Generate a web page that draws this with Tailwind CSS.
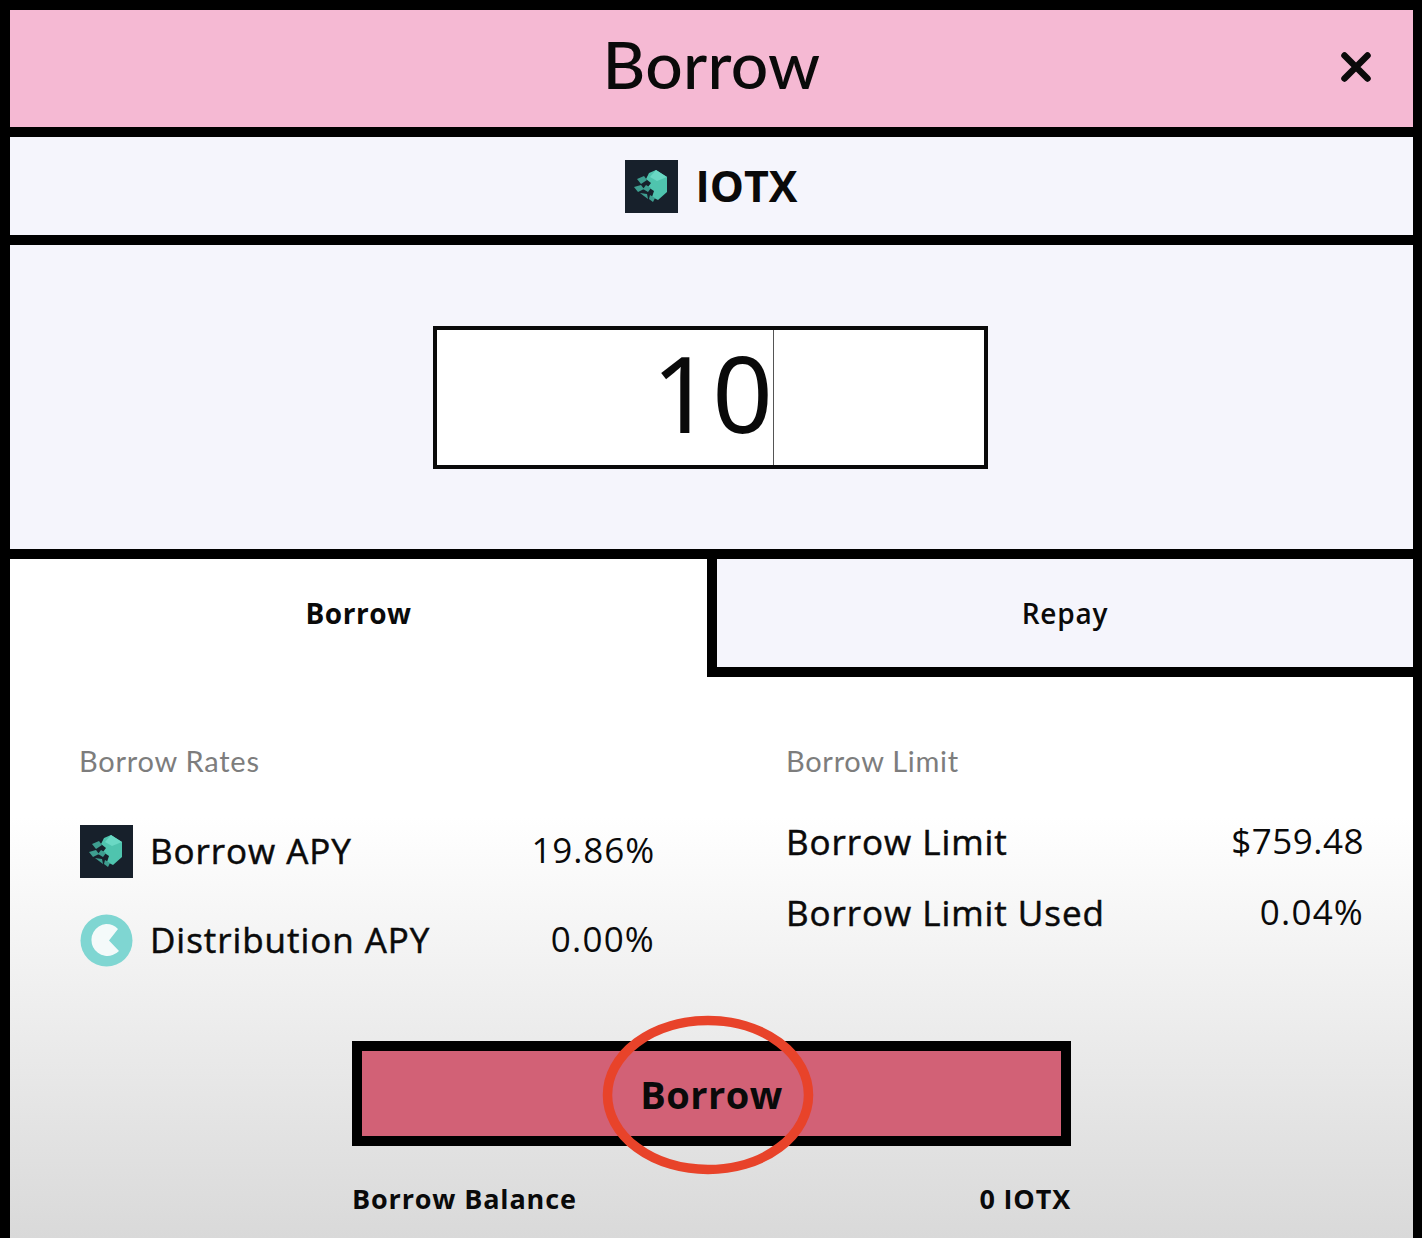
<!DOCTYPE html>
<html lang="en">
<head>
  <meta charset="UTF-8">
  <title>Borrow</title>
  <script src="https://cdn.jsdelivr.net/npm/@tailwindcss/browser@4"></script>
</head>
<body class="bg-black font-['Open_Sans',sans-serif] text-[#0a0a0a]">
  <div class="h-[1238px] w-[1422px] overflow-hidden bg-black pl-[10px] pr-[9px] pt-[10px]">
    <!-- title -->
    <header class="relative flex h-[117px] items-center justify-center bg-[#f5b9d3] pb-[9px]">
      <h1 class="font-['Lato',sans-serif] text-[66px] font-medium leading-none tracking-[0.3px]">Borrow</h1>
      <svg class="absolute left-[1330px] top-[41px]" width="32" height="32" viewBox="0 0 32 32" fill="none" stroke="#0a0a0a" stroke-width="6.5" stroke-linecap="round">
        <path d="M4.5 4.5l23 23M27.5 4.5l-23 23"/>
      </svg>
    </header>

    <!-- asset -->
    <div class="mt-[10px] flex h-[98px] items-center justify-center gap-[17px] bg-[#f5f5fc]">
      <svg width="53" height="53" viewBox="0 0 53 53">
        <rect width="53" height="53" fill="#17202b"/>
        <path d="M24 13l7-3 11 7v15l-9 8-6-3 2-6-6-4 3-4-5-4z" fill="#4fc4ae"/>
        <path d="M31 10l11 7-10 4-7-4z" fill="#6ad8c4"/>
        <path d="M12 19l7-3 3 4-6 4zM9 27l7-2 3 4-6 3zM21 25l5 3-3 4-5-3zM15 33l7 1 1 5zM25 35l5 3-2 4-4-3z" fill="#3e9e90"/>
      </svg>
      <span class="pb-[2px] text-[43px] font-bold leading-none">IOTX</span>
    </div>

    <!-- amount -->
    <div class="mt-[10px] flex h-[304px] items-center justify-center bg-[#f5f5fc]">
      <div class="mr-[2px] flex h-[143px] w-[555px] items-center justify-end border-[4px] border-[#0a0a0a] bg-white">
        <div class="flex h-full w-[337px] items-center justify-end border-r border-[#555]">
          <span class="pb-[11px] font-['Noto_Sans',sans-serif] text-[106px] leading-none">10</span>
        </div>
        <div class="w-[210px]"></div>
      </div>
    </div>

    <!-- tabs and details -->
    <section class="mt-[10px] h-[679px] bg-[linear-gradient(to_bottom,#ffffff_0%,#ffffff_38%,#d9d9d9_100%)]">
      <div class="flex h-[118px]">
        <div class="flex w-[697px] items-center justify-center pb-[10px] text-[28px] font-bold tracking-[0.5px]">Borrow</div>
        <div class="flex flex-1 items-center justify-center border-b-[10px] border-l-[10px] border-black bg-[#f5f5fc] text-[28px] font-semibold tracking-[0.8px]">Repay</div>
      </div>

      <div class="grid grid-cols-[707px_1fr] pt-[65px]">
        <div class="pl-[70px] pr-[62px]">
          <p class="ml-[-1px] font-['Lato',sans-serif] text-[29px] leading-[38px] tracking-[0.75px] text-[#7d7d7d]">Borrow Rates</p>
          <div class="mt-[44px] flex h-[53px] items-center justify-between">
            <div class="flex items-center gap-[17px]">
              <svg class="translate-y-px" width="53" height="53" viewBox="0 0 53 53">
                <rect width="53" height="53" fill="#17202b"/>
                <path d="M24 13l7-3 11 7v15l-9 8-6-3 2-6-6-4 3-4-5-4z" fill="#4fc4ae"/>
                <path d="M31 10l11 7-10 4-7-4z" fill="#6ad8c4"/>
                <path d="M12 19l7-3 3 4-6 4zM9 27l7-2 3 4-6 3zM21 25l5 3-3 4-5-3zM15 33l7 1 1 5zM25 35l5 3-2 4-4-3z" fill="#3e9e90"/>
              </svg>
              <span class="text-[35px] leading-none tracking-[0.95px] [-webkit-text-stroke:0.5px_#0a0a0a]">Borrow APY</span>
            </div>
            <span class="pb-[2px] text-[35px] leading-none tracking-[0.9px]">19.86%</span>
          </div>
          <div class="mt-[36px] flex h-[53px] items-center justify-between">
            <div class="flex items-center gap-[17px]">
              <svg class="translate-y-px" width="53" height="53" viewBox="0 0 53 53">
                <circle cx="26.5" cy="26.5" r="26" fill="#7fd6d2"/>
                <path d="M26 10A16 16 0 1 0 39 37L29 26.5 38 15A16 16 0 0 0 26 10z" fill="#f4fafa"/>
              </svg>
              <span class="text-[35px] leading-none tracking-[0.95px] [-webkit-text-stroke:0.5px_#0a0a0a]">Distribution APY</span>
            </div>
            <span class="pb-[2px] text-[35px] leading-none tracking-[1.2px]">0.00%</span>
          </div>
        </div>
        <div class="pl-[69px] pr-[49px]">
          <p class="font-['Lato',sans-serif] text-[29px] leading-[38px] tracking-[0.7px] text-[#7d7d7d]">Borrow Limit</p>
          <div class="mt-[38px] flex h-[46px] items-center justify-between text-[35px] leading-none">
            <span class="tracking-[0.95px] [-webkit-text-stroke:0.5px_#0a0a0a]">Borrow Limit</span>
            <span class="pb-[2px] tracking-[0.5px]">$759.48</span>
          </div>
          <div class="mt-[25px] flex h-[46px] items-center justify-between text-[35px] leading-none">
            <span class="tracking-[0.95px] [-webkit-text-stroke:0.5px_#0a0a0a]">Borrow Limit Used</span>
            <span class="pb-[2px] tracking-[1.2px]">0.04%</span>
          </div>
        </div>
      </div>

      <div class="relative ml-[342px] mt-[75px] w-[719px]">
        <button class="flex h-[105px] w-full items-center justify-center border-[10px] border-black bg-[#d26176] text-[38px] font-bold leading-none tracking-[0.5px]">Borrow</button>
        <svg class="absolute left-[250px] top-[-26px]" width="212" height="160" viewBox="0 0 212 160" fill="none">
          <ellipse cx="106" cy="80" rx="100.5" ry="74.5" stroke="#e8432a" stroke-width="9.5"/>
        </svg>
        <div class="mt-[39px] flex items-center justify-between text-[27px] font-bold leading-none tracking-[0.85px]">
          <span>Borrow Balance</span>
          <span>0 IOTX</span>
        </div>
      </div>
    </section>
  </div>
</body>
</html>
